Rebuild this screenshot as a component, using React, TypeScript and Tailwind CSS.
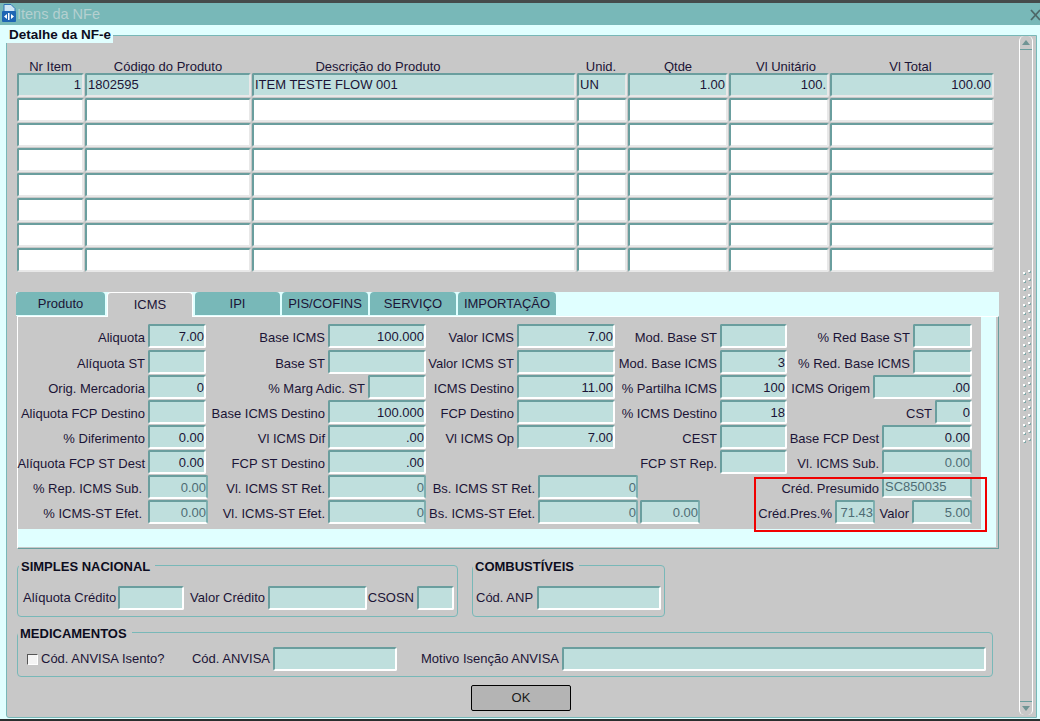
import React from 'react';

const INPUT = 'h-[24px] shrink-0 rounded-[2px] border-2 border-t-[#6a9e9e] border-l-[#6a9e9e] border-r-white border-b-white bg-[#bfdfdd] flex items-center text-[#1b1436] leading-none';
const DISABLED = 'h-[24px] shrink-0 rounded-[2px] border-2 border-t-[#6a9e9e] border-l-[#6a9e9e] border-r-[#7fb0b0] border-b-white bg-[#bfdfdd] flex items-center text-[#4e6c74] leading-none';

const Box: React.FC<{ w: string; v?: string; off?: boolean; left?: boolean }> = ({ w, v, off, left }) => (
  <div className={`${off ? DISABLED : INPUT} ${w} ${left ? 'justify-start' : 'justify-end'}`}>{v}</div>
);

// labels of the ICMS panel sit a little under the centre of their field
const Lbl: React.FC<{ w: string; t?: string; tight?: boolean }> = ({ w, t, tight }) => (
  <div className={`${w} shrink-0 whitespace-nowrap flex justify-end items-center pt-[3px] ${tight ? 'pr-[6px]' : 'pr-[3px]'}`}>{t}</div>
);

const GroupLbl: React.FC<{ w: string; t: string }> = ({ w, t }) => (
  <div className={`${w} shrink-0 whitespace-nowrap flex justify-end items-center pr-[3px]`}>{t}</div>
);

const cols = ['w-[67px]', 'w-[166px]', 'w-[324px]', 'w-[50px]', 'w-[100px]', 'w-[100px]', 'w-[164px]'];
const headers = [
  { t: 'Nr Item', c: '' },
  { t: 'Código do Produto', c: '' },
  { t: 'Descrição do Produto', c: 'pr-[72px]' },
  { t: 'Unid.', c: 'pr-[2px]' },
  { t: 'Qtde', c: '' },
  { t: 'Vl Unitário', c: 'pl-[14px]' },
  { t: 'Vl Total', c: 'pr-[3px]' },
];
const tabs = [
  { t: 'Produto', w: 'w-[89px]' },
  { t: 'ICMS', w: 'w-[86px]', active: true },
  { t: 'IPI', w: 'w-[85px]' },
  { t: 'PIS/COFINS', w: 'w-[86px]' },
  { t: 'SERVIÇO', w: 'w-[86px]' },
  { t: 'IMPORTAÇÃO', w: 'w-[98px]' },
];

const Cell: React.FC<{ w: string; v?: string; right?: boolean; filled?: boolean }> = ({ w, v, right, filled }) => (
  <div className={`${w} h-[24px] rounded-[2px] border-2 border-t-[#6a9e9e] border-l-[#6a9e9e] border-r-[#e8e8e8] border-b-[#e8e8e8] flex items-center px-[1px] text-[#1b1436] ${filled ? 'bg-[#bfdfdd]' : 'bg-white'} ${right ? 'justify-end' : 'justify-start'}`}>
    {v}
  </div>
);

const Legend: React.FC<{ t: string; left: string }> = ({ t, left }) => (
  <div className={`absolute top-[-6px] ${left} bg-[#c8c8c8] pl-[2px] pr-[5px] font-bold leading-[14px] text-[#0c0c20]`}>{t}</div>
);

export default function App() {
  return (
    <div className="relative w-[1040px] h-[721px] overflow-hidden bg-[#e0ffff] font-['Liberation_Sans',Arial,sans-serif] text-[13px] text-[#1b1436] flex flex-col">
      <div className="h-[3px] shrink-0 bg-[#454b4b]" />
      <div className="h-[22px] shrink-0 bg-[#78b8b8] flex items-center pl-[2px] relative">
        <svg width="14" height="18" viewBox="0 0 14 18" className="mr-[1px] -mt-[3px] shrink-0">
          <path d="M2 .5h7l4 4v4H2z" fill="#cfe6f5" stroke="#2f74b8" />
          <rect x="0" y="7" width="14" height="11" rx="1" fill="#1f66b4" />
          <path d="M2 12.5l3-2.5v5zM12 12.5l-3-2.5v5z" fill="#fff" />
          <rect x="6" y="9" width="1.5" height="7" fill="#fff" />
        </svg>
        <span className="text-[14.5px] text-[#b4d0d0] pt-[2px]">Itens da NFe</span>
        <svg width="10" height="12" viewBox="0 0 10 12" className="absolute right-0 top-[6px]">
          <path d="M1 1l9 10M10 1L1 11" stroke="#4d6868" strokeWidth="1.8" fill="none" />
        </svg>
      </div>

      <div className="flex-1 min-h-0 pl-[6px] pr-[3px] pt-[10px] pb-[1px]">
        <div className="h-full bg-[#c8c8c8] border border-[#78b8b8] rounded-bl-[3px] pl-[10px] flex">
          <div className="w-[1002px] shrink-0">
            {/* item table */}
            <div className="flex gap-[1px] pt-[23px] h-[37px]">
              {headers.map((h, i) => (
                <div key={h.t} className={`${cols[i]} ${h.c} text-center leading-[15px] whitespace-nowrap`}>{h.t}</div>
              ))}
            </div>
            <div className="flex flex-col gap-[1px]">
              <div className="flex gap-[1px]">
                <Cell w={cols[0]} v="1" right filled />
                <Cell w={cols[1]} v="1802595" filled />
                <Cell w={cols[2]} v="ITEM TESTE FLOW 001" filled />
                <Cell w={cols[3]} v="UN" filled />
                <Cell w={cols[4]} v="1.00" right filled />
                <Cell w={cols[5]} v="100." right filled />
                <Cell w={cols[6]} v="100.00" right filled />
              </div>
              {[0, 1, 2, 3, 4, 5, 6].map((r) => (
                <div key={r} className="flex gap-[1px]">
                  {cols.map((c, i) => (
                    <Cell key={i} w={c} />
                  ))}
                </div>
              ))}
            </div>

            {/* tabs */}
            <div className="mt-[20px] ml-[-1px] w-[983px] h-[24px] bg-[#e0ffff] flex gap-[2px]">
              {tabs.map((t) => (
                <div
                  key={t.t}
                  className={`${t.w} rounded-t-[4px] flex items-center justify-center ${t.active ? 'h-[25px] bg-[#c8c8c8] border-t border-x border-white z-10' : 'h-[23px] bg-[#78b8b8]'}`}
                >
                  {t.t}
                </div>
              ))}
            </div>

            {/* ICMS panel */}
            <div className="w-[982px] h-[233px] bg-[#c8c8c8] border-t border-l border-white border-r border-r-[#6a9e9e] border-b border-b-[#6a9e9e]">
              <div className="relative w-[978px] h-[230px] bg-[#e0ffff]">
                <div className="w-[963px] h-[212px] bg-[#c8c8c8] pt-[7px] flex flex-col gap-[1px]">
                  <div className="flex">
                    <Lbl w="w-[130px]" t="Aliquota" /><Box w="w-[58px]" v="7.00" />
                    <Lbl w="w-[122px]" t="Base ICMS" /><Box w="w-[98px]" v="100.000" />
                    <Lbl w="w-[91px]" t="Valor ICMS" /><Box w="w-[98px]" v="7.00" />
                    <Lbl w="w-[105px]" t="Mod. Base ST" /><Box w="w-[67px]" />
                    <Lbl w="w-[126px]" t="% Red Base ST" /><Box w="w-[59px]" />
                  </div>
                  <div className="flex mt-[1px]">
                    <Lbl w="w-[130px]" t="Alíquota ST" /><Box w="w-[58px]" />
                    <Lbl w="w-[122px]" t="Base ST" /><Box w="w-[98px]" />
                    <Lbl w="w-[91px]" t="Valor ICMS ST" /><Box w="w-[98px]" />
                    <Lbl w="w-[105px]" t="Mod. Base ICMS" /><Box w="w-[67px]" v="3" />
                    <Lbl w="w-[126px]" t="% Red. Base ICMS" /><Box w="w-[59px]" />
                  </div>
                  <div className="flex">
                    <Lbl w="w-[130px]" t="Orig. Mercadoria" /><Box w="w-[58px]" v="0" />
                    <Lbl w="w-[162px]" t="% Marg Adic. ST" /><Box w="w-[58px]" />
                    <Lbl w="w-[91px]" t="ICMS Destino" /><Box w="w-[98px]" v="11.00" />
                    <Lbl w="w-[105px]" t="% Partilha ICMS" /><Box w="w-[67px]" v="100" />
                    <Lbl w="w-[86px]" t="ICMS Origem" /><Box w="w-[99px]" v=".00" />
                  </div>
                  <div className="flex">
                    <Lbl w="w-[130px]" t="Aliquota FCP Destino" /><Box w="w-[58px]" />
                    <Lbl w="w-[122px]" t="Base ICMS Destino" /><Box w="w-[98px]" v="100.000" />
                    <Lbl w="w-[91px]" t="FCP Destino" /><Box w="w-[98px]" />
                    <Lbl w="w-[105px]" t="% ICMS Destino" /><Box w="w-[67px]" v="18" />
                    <Lbl w="w-[148px]" t="CST" /><Box w="w-[37px]" v="0" />
                  </div>
                  <div className="flex">
                    <Lbl w="w-[130px]" t="% Diferimento" /><Box w="w-[58px]" v="0.00" />
                    <Lbl w="w-[122px]" t="Vl ICMS Dif" /><Box w="w-[98px]" v=".00" />
                    <Lbl w="w-[91px]" t="Vl ICMS Op" /><Box w="w-[98px]" v="7.00" />
                    <Lbl w="w-[105px]" t="CEST" /><Box w="w-[67px]" />
                    <Lbl w="w-[95px]" t="Base FCP Dest" /><Box w="w-[90px]" v="0.00" />
                  </div>
                  <div className="flex">
                    <Lbl w="w-[130px]" t="Alíquota FCP ST Dest" /><Box w="w-[58px]" v="0.00" />
                    <Lbl w="w-[122px]" t="FCP ST Destino" /><Box w="w-[98px]" v=".00" />
                    <Lbl w="w-[294px]" t="FCP ST Rep." /><Box w="w-[67px]" />
                    <Lbl w="w-[95px]" t="Vl. ICMS Sub." /><Box w="w-[90px]" v="0.00" off />
                  </div>
                  <div className="flex">
                    <Lbl w="w-[130px]" t="% Rep. ICMS Sub." tight /><Box w="w-[60px]" v="0.00" off />
                    <Lbl w="w-[120px]" t="Vl. ICMS ST Ret." /><Box w="w-[98px]" v="0" off />
                    <Lbl w="w-[112px]" t="Bs. ICMS ST Ret." /><Box w="w-[100px]" v="0" off />
                    <Lbl w="w-[244px]" t="Créd. Presumido" />
                    <div className={`${DISABLED} w-[90px] !h-[21px] mt-[2px] justify-start pl-[1px] pb-[3px]`}>SC850035</div>
                  </div>
                  <div className="flex">
                    <Lbl w="w-[130px]" t="% ICMS-ST Efet." tight /><Box w="w-[60px]" v="0.00" off />
                    <Lbl w="w-[120px]" t="Vl. ICMS-ST Efet." /><Box w="w-[98px]" v="0" off />
                    <Lbl w="w-[112px]" t="Bs. ICMS-ST Efet." /><Box w="w-[100px]" v="0" off />
                    <div className="w-[2px]" /><Box w="w-[60px]" v="0.00" off />
                    <Lbl w="w-[135px]" t="Créd.Pres.%" /><Box w="w-[40px]" v="71.43" off />
                    <Lbl w="w-[37px]" t="Valor" /><Box w="w-[60px]" v="5.00" off />
                  </div>
                </div>
                <div className="absolute left-[736px] top-[160px] w-[233px] h-[55px] border-[2.5px] border-[#f00000]" />
              </div>
            </div>

            {/* lower groups */}
            <div className="flex mt-[16px] gap-[14px]">
              <div className="relative w-[441px] h-[52px] border border-[#78b8b8] rounded-[4px] flex items-center pl-[5px] pt-[14px]">
                <Legend t="SIMPLES NACIONAL" left="left-[1px]" />
                <span className="w-[95px] shrink-0 whitespace-nowrap">Alíquota Crédito</span>
                <Box w="w-[66px]" />
                <GroupLbl w="w-[84px]" t="Valor Crédito" />
                <Box w="w-[99px]" />
                <GroupLbl w="w-[50px]" t="CSOSN" />
                <Box w="w-[37px]" />
              </div>
              <div className="relative w-[193px] h-[52px] border border-[#78b8b8] rounded-[4px] flex items-center pl-[3px] pt-[14px]">
                <Legend t="COMBUSTÍVEIS" left="left-[0px]" />
                <span className="w-[61px] shrink-0 whitespace-nowrap">Cód. ANP</span>
                <Box w="w-[124px]" />
              </div>
            </div>
            <div className="relative mt-[15px] w-[976px] h-[45px] border border-[#78b8b8] rounded-[4px] flex items-center pl-[9px] pt-[9px]">
              <Legend t="MEDICAMENTOS" left="left-[0px]" />
              <span className="w-[11px] h-[11px] border border-t-[#555] border-l-[#555] border-r-white border-b-white bg-[#f4f4f4] mr-[3px] shrink-0" />
              <span className="w-[137px] shrink-0 whitespace-nowrap">Cód. ANVISA Isento?</span>
              <GroupLbl w="w-[95px]" t="Cód. ANVISA" />
              <Box w="w-[124px]" />
              <GroupLbl w="w-[165px]" t="Motivo Isenção ANVISA" />
              <Box w="w-[424px]" />
            </div>
            <div className="mt-[8px] ml-[454px] w-[100px] h-[26px] bg-[#b4b4b4] border border-black rounded-[2px] flex items-center justify-center text-[#1a1a1a]">
              OK
            </div>
          </div>

          {/* scrollbar */}
          <div className="w-[14px] h-[679px] border-x border-white rounded-t-[5px] rounded-b-[5px] flex flex-col justify-between shrink-0">
            <div className="h-[14px] border-b border-[#6a9e9e] flex items-center justify-center">
              <svg width="8" height="5" viewBox="0 0 8 5"><path d="M4 0l4 5H0z" fill="#6f9494" /></svg>
            </div>
            <div className="flex flex-col gap-[4px] items-center mb-[40px]">
              {Array.from({ length: 22 }).map((_, i) => (
                <div key={i} className="flex gap-[3px]">
                  <span className="w-[2px] h-[2px] bg-white mt-[2px] shadow-[1px_1px_0_#7fa8a8]" />
                  <span className="w-[2px] h-[2px] bg-white shadow-[1px_1px_0_#7fa8a8]" />
                </div>
              ))}
            </div>
            <div className="h-[14px] border-t border-[#6a9e9e] flex items-center justify-center">
              <svg width="8" height="5" viewBox="0 0 8 5"><path d="M0 0h8L4 5z" fill="#6f9494" /></svg>
            </div>
          </div>
        </div>
      </div>
      <div className="h-[2px] shrink-0 bg-[#2a2f2f]" />

      {/* tab title sitting on the frame */}
      <div className="absolute left-0 top-[25px] w-[113px] h-[18px] bg-[#e0ffff] pl-[9px] pt-[3px] font-bold leading-[14px] text-[13.5px] text-[#0c0c20]">
        Detalhe da NF-e
      </div>
    </div>
  );
}
